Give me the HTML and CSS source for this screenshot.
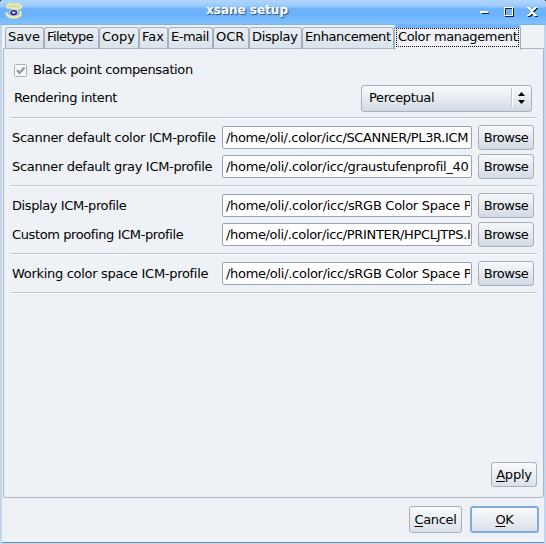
FILE: index.html
```html
<!DOCTYPE html>
<html lang="en">
<head>
<meta charset="utf-8">
<title>xsane setup</title>
<link rel="stylesheet" href="styles.css">
</head>
<body>
<div class="window">
  <header class="titlebar">
    <svg class="app-icon" width="18" height="18" viewBox="0 0 18 18" fill="none">
      <path d="M1.500 4.500C4 1 8 1.500 9.500 2.800C12.500 1.200 17 3 16 5.500C14.500 8 11 6 9.500 6.500C7 7 5.500 4.500 2 6" fill="#cfdcae" stroke="#eeeaa0" stroke-width="2"/>
      <path d="M2 10.500C1 13.500 4.500 15.500 9 15.500C14 15.500 17.500 13 14.500 9" stroke="#eeeaa0" stroke-width="2.600"/>
      <ellipse cx="8.700" cy="10.700" rx="4.500" ry="3.500" fill="#cfdde6"/>
      <ellipse cx="8.700" cy="10.700" rx="2.700" ry="1.900" fill="#d8e6ff" stroke="#25248c" stroke-width="1.600"/>
    </svg>
    <h1 class="title">xsane setup</h1>
    <svg class="controls" width="62" height="14" viewBox="0 0 62 14" shape-rendering="crispEdges" fill="none">
      <path d="M3 8.500H10" stroke="#0c2035"/>
      <path d="M1 7H9" stroke="#fff" stroke-width="2"/>
      <path d="M26.500 3.500H34.500V11.500H26.500Z" stroke="#10243a"/>
      <path d="M25.500 2.500H33.500V10.500H25.500Z" stroke="#fff"/>
      <path d="M50 3L58 12M58 3L50 12" stroke="#10243a" stroke-width="2"/>
      <path d="M49 2L57 11M57 2L49 11" stroke="#fff" stroke-width="2"/>
    </svg>
  </header>
  <nav class="tabs">
    <div class="tab t-save"><span>Save</span></div>
    <div class="tab t-filetype"><span>Filetype</span></div>
    <div class="tab t-copy"><span>Copy</span></div>
    <div class="tab t-fax"><span>Fax</span></div>
    <div class="tab t-email"><span>E-mail</span></div>
    <div class="tab t-ocr"><span>OCR</span></div>
    <div class="tab t-display"><span>Display</span></div>
    <div class="tab t-enh"><span>Enhancement</span></div>
    <div class="tab t-color active"><span>Color management</span></div>
  </nav>
  <main class="panel">
    <div class="check-row">
      <svg class="check" width="13" height="13" viewBox="0 0 13 13"><rect x=".5" y=".5" width="12" height="12" rx="1" fill="#f8f9fa" stroke="#a9adb5"/><path d="M3 6L5.500 9L10.500 3.500" fill="none" stroke="#8e9298" stroke-width="2"/></svg>
      <span class="l-black">Black point compensation</span>
    </div>
    <div class="intent-row">
      <span class="l-intent">Rendering intent</span>
      <div class="select"><span class="l-perc">Perceptual</span>
        <svg class="arrows" width="20" height="22" viewBox="0 0 20 22"><path d="M.5 1V20" stroke="#c3c9d2"/><path d="M1.500 1V20" stroke="#fff"/><path d="M7 9L10.500 5L14 9ZM7 13L10.500 17L14 13Z" fill="#000"/></svg>
      </div>
    </div>
    <section class="group">
      <div class="row"><span class="label l-a">Scanner default color ICM-profile</span><div class="input"><span class="v-a">/home/oli/.color/icc/SCANNER/PL3R.ICM</span></div><button>Browse</button></div>
      <div class="row"><span class="label l-b">Scanner default gray ICM-profile</span><div class="input"><span class="v-b">/home/oli/.color/icc/graustufenprofil_40</span></div><button>Browse</button></div>
    </section>
    <section class="group">
      <div class="row"><span class="label l-c">Display ICM-profile</span><div class="input"><span class="v-c">/home/oli/.color/icc/sRGB Color Space P</span></div><button>Browse</button></div>
      <div class="row"><span class="label l-d">Custom proofing ICM-profile</span><div class="input"><span class="v-d">/home/oli/.color/icc/PRINTER/HPCLJTPS.I</span></div><button>Browse</button></div>
    </section>
    <section class="group last">
      <div class="row"><span class="label l-e">Working color space ICM-profile</span><div class="input"><span class="v-c">/home/oli/.color/icc/sRGB Color Space P</span></div><button>Browse</button></div>
    </section>
    <button class="apply"><span><u>A</u>pply</span></button>
  </main>
  <footer class="footer">
    <button class="cancel"><span><u>C</u>ancel</span></button>
    <button class="ok"><span><u>O</u>K</span></button>
  </footer>
</div>
</body>
</html>
```
FILE: styles.css
```css
* { box-sizing: border-box; }
body { margin: 0; background: #000; overflow: hidden; }
.window {
  width: 546px; height: 544px; display: flex; flex-direction: column;
  font: 13px/16px "DejaVu Sans", sans-serif; color: #000;
  background: #eef2f7; white-space: nowrap;
  border: solid #c2d5e9; border-width: 0 2px 1px;
  border-radius: 3px 3px 0 0; box-shadow: inset 0 -1px #6d92be;
}
.titlebar {
  height: 25px; flex: none; margin: 0 -2px; padding: 0 5px 0 5px;
  display: flex; align-items: flex-start; justify-content: space-between; border-radius: 3px 3px 0 0;
  background: linear-gradient(#aed5ff 0, #9ccaff 6px, #6db2fa 9px, #6bb3ff 16px, #82c0ff 23px, #74b1ef 25px);
}
.app-icon { margin-top: 2px; }
.title { margin: 2px 0 0 -8px; font-size: 12px; line-height: 16px; color: #fff; text-shadow: 1px 1px 1px #34516f; }
.controls { margin-top: 5px; }
.tabs { display: flex; height: 24px; flex: none; padding: 2px 0 0 3px; position: relative; }
.tab {
  height: 22px; border: 1px solid #a3b0be; border-bottom-color: #a8b6c5; border-radius: 3px 3px 0 0;
  background: linear-gradient(#e8eef3, #dae3eb); padding: 1px 0 0 2px;
}
.t-save { width: 39px; } .t-filetype { width: 55px; letter-spacing: -.58px; } .t-copy { width: 40px; } .t-fax { width: 29px; }
.t-email { width: 45px; letter-spacing: -.5px; } .t-ocr { width: 36px; }
.t-display { width: 53px; letter-spacing: -.35px; } .t-enh { width: 92px; letter-spacing: -.4px; }
.t-color { width: 127px; letter-spacing: -.36px; }
.tab.active { height: 25px; margin-top: -2px; background: #eef2f7; border-top: 3px solid #70b3fc; border-bottom: 0; padding: 0 1px; }
.active span { display: block; width: 123px; height: 19px; padding: 0 0 0 1px; border: 1px dotted #000; }
.panel {
  height: 450px; width: 541px; margin: -1px 0 0 1px; padding: 13px 6px 0 8px; flex: none;
  border: 1px solid #a8b6c5; border-radius: 0 0 3px 2px; display: flex; flex-direction: column;
}
.check-row { display: flex; align-items: center; gap: 6px; height: 16px; padding-left: 2px; letter-spacing: -.36px; }
.intent-row { display: flex; align-items: center; justify-content: space-between; height: 28px; margin-top: 6px; padding: 0 0 0 2px; letter-spacing: -.36px; }
.select {
  width: 171px; height: 27px; margin-right: 5px; border: 1px solid #a7b1bf; border-radius: 3px;
  display: flex; align-items: center; justify-content: space-between; padding-left: 7px;
  background: linear-gradient(#f8fafb, #e3e8ee 60%, #d3dae3);
}
.group { border-top: 1px solid #bcc8d4; box-shadow: inset 0 1px #fafcfe; margin-left: -2px; padding: 7px 0 0 2px; height: 68px; display: flex; flex-direction: column; gap: 4px; flex: none; }
.intent-row + .group { margin-top: 5px; }
.group.last { height: 40px; border-bottom: 1px solid #bcc8d4; box-shadow: inset 0 1px #fafcfe, 0 1px #fafcfe; }
.row { display: flex; align-items: center; height: 25px; }
.label { width: 210px; flex: none; }
.l-a { letter-spacing: -.29px; } .l-b { letter-spacing: -.32px; } .l-c { letter-spacing: -.4px; }
.l-d { letter-spacing: -.39px; } .l-e { letter-spacing: -.3px; }
.input {
  width: 250px; height: 23px; margin-right: 6px; background: #fff; border: 1px solid #98a6b9;
  border-radius: 2px; padding: 3px 1px 0 3px; display: flex; flex: none;
}
.input span { display: block; flex: none; width: 244px; overflow: hidden; }
.v-a { letter-spacing: -.36px; } .v-b { letter-spacing: -.31px; } .v-c { letter-spacing: -.29px; } .v-d { letter-spacing: -.34px; }
button {
  font: inherit; color: #000; width: 56px; height: 25px; padding: 0; border: 1px solid #a5afbd; border-radius: 3px;
  background: linear-gradient(#f6f8fa, #e3e8ee 55%, #d2dae3); text-align: center; flex: none; letter-spacing: -.45px;
}
.apply { width: 46px; margin: auto 0 10px auto; letter-spacing: -.2px; }
.footer { display: flex; justify-content: flex-end; gap: 8px; padding: 8px 5px 0 0; }
.footer button { height: 27px; letter-spacing: -.3px; background: linear-gradient(#f8fafb, #e9edf2 55%, #dae0e8); }
.apply { background: linear-gradient(#f8fafb, #e9edf2 55%, #dae0e8); }
.footer .cancel { width: 53px; }
.footer .ok { width: 69px; border: 2px solid #80ade0; }
u { text-underline-offset: 2px; }
```
